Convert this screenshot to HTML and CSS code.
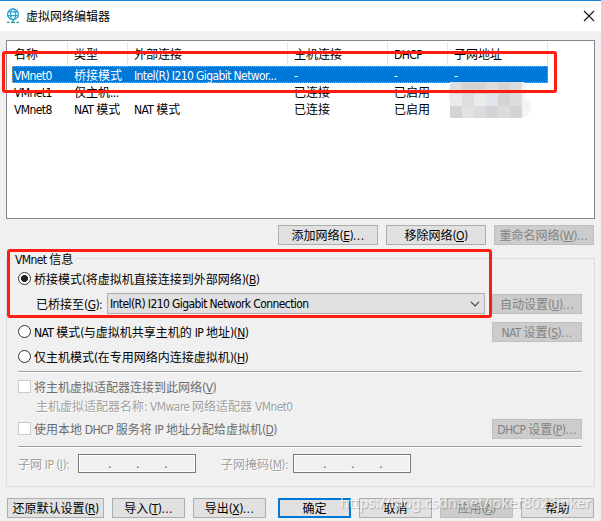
FILE: index.html
```html
<!DOCTYPE html>
<html lang="zh-CN">
<head>
<meta charset="utf-8">
<title>虚拟网络编辑器</title>
<link rel="stylesheet" href="styles.css">
</head>
<body>
<div class="window">
  <header class="titlebar">
    <svg class="logo" width="14" height="16" viewBox="0 0 14 16" fill="none" stroke="#2ba3cf" stroke-width="1.3">
      <circle cx="7" cy="6.3" r="5.4"/><ellipse cx="7" cy="6.3" rx="2.5" ry="5.4"/>
      <path d="M2.3 3.9h9.4M1.6 7.7h10.8M7 11.7v2.5"/><path d="M1 14.4h2.5M5 14.4h4M10.5 14.4h2.5" stroke="#18a08d"/>
    </svg>
    <h1 class="title">虚拟网络编辑器</h1>
    <svg class="close" width="12" height="12" viewBox="0 0 12 12" stroke="#111" stroke-width="1.1"><path d="M1 1l10 10M11 1L1 11"/></svg>
  </header>

  <section class="list">
    <div class="row head"><span>名称</span><span>类型</span><span>外部连接</span><span>主机连接</span><span><b>DHCP</b></span><span>子网地址</span></div>
    <div class="row selected"><span><b>VMnet0</b></span><span>桥接模式</span><span><b>Intel(R) I210 Gigabit Networ...</b></span><span><b>-</b></span><span><b>-</b></span><span><b>-</b></span></div>
    <div class="row"><span><b>VMnet1</b></span><span>仅主机<b>...</b></span><span></span><span>已连接</span><span>已启用</span><span></span></div>
    <div class="row"><span><b>VMnet8</b></span><span><b>NAT </b>模式</span><span><b>NAT </b>模式</span><span>已连接</span><span>已启用</span><span></span></div>
    <svg class="mosaic" width="84" height="37" viewBox="0 0 84 37">
      <path d="M4 0h73q5 6 1 16q6 3 6 9q0 9-9 11H3V22Q-2 10 4 0z" fill="#f4f4f6"/>
      <path d="M3 0h12v12H3zM15 12h12v12H15z" fill="#dedee0"/><path d="M15 0h24v12H15zM51 0h12v24H51z" fill="#d4d4d5"/>
      <path d="M39 0h12v12H39zM63 0h12v24H63z" fill="#dddddd"/><path d="M3 12h12v12H3zM27 12h12v12H27z" fill="#eaeaea"/><path d="M39 12h12v12H39z" fill="#e1e4e8"/>
      <path d="M3 24h12v12H3zM39 24h12v12H39zM63 24h12v12H63z" fill="#d5d3d5"/><path d="M15 24h12v12H15z" fill="#e2e2e4"/><path d="M27 24h12v12H27zM51 24h12v12H51z" fill="#dcdcde"/>
    </svg>
    <div class="mark mark-row"></div>
  </section>

  <div class="actions">
    <button>添加网络<b>(<u>E</u>)<i>...</i></b></button>
    <button>移除网络<b>(<u>O</u>)</b></button>
    <button disabled>重命名网络<b>(<u>W</u>)<i>...</i></b></button>
  </div>

  <section class="group">
    <div class="legend"><b>VMnet </b>信息</div>
    <div class="line l1"><i class="radio on"></i><span>桥接模式<b>(</b>将虚拟机直接连接到外部网络<b>)(<u>B</u>)</b></span></div>
    <div class="line l2">
      <span class="bridge-label">已桥接至<b>(<u>G</u>):</b></span>
      <div class="select"><b>Intel(R) I210 Gigabit Network Connection</b><svg width="10" height="6" viewBox="0 0 10 6" fill="none" stroke="#444" stroke-width="1.2"><path d="M1 .8l4 4 4-4"/></svg></div>
      <button disabled>自动设置<b>(<u>U</u>)<i>...</i></b></button>
    </div>
    <div class="line l3"><i class="radio"></i><span><b>NAT </b>模式<b>(</b>与虚拟机共享主机的<b> IP </b>地址<b>)(<u>N</u>)</b></span><button disabled><b>NAT </b>设置<b>(<u>S</u>)<i>...</i></b></button></div>
    <div class="line l4"><i class="radio"></i><span>仅主机模式<b>(</b>在专用网络内连接虚拟机<b>)(<u>H</u>)</b></span></div>
    <div class="rule"></div>
    <div class="line l5 dim"><i class="check"></i><span>将主机虚拟适配器连接到此网络<b>(<u>V</u>)</b></span></div>
    <div class="line l6 faint"><span>主机虚拟适配器名称<b>: VMware </b>网络适配器<b> VMnet0</b></span></div>
    <div class="line l7 dim"><i class="check"></i><span>使用本地<b> DHCP </b>服务将<b> IP </b>地址分配给虚拟机<b>(<u>D</u>)</b></span><button disabled><b>DHCP </b>设置<b>(<u>P</u>)<i>...</i></b></button></div>
    <div class="rule"></div>
    <div class="line l8 faint">
      <span class="ip-label">子网<b> IP (<u>I</u>):</b></span><div class="ip"><b>.</b><b>.</b><b>.</b></div>
      <span class="mask-label">子网掩码<b>(<u>M</u>):</b></span><div class="ip"><b>.</b><b>.</b><b>.</b></div>
    </div>
    <div class="mark mark-group"></div>
  </section>

  <footer class="footer">
    <button class="wide">还原默认设置<b>(<u>R</u>)</b></button>
    <button>导入<b>(<u>T</u>)<i>...</i></b></button>
    <button>导出<b>(<u>X</u>)<i>...</i></b></button>
    <button class="primary">确定</button>
    <button>取消</button>
    <button disabled>应用<b>(<u>A</u>)</b></button>
    <button>帮助</button>
    <div class="watermark">https://blog.csdn.net/joker8023joker</div>
  </footer>
</div>
</body>
</html>
```
FILE: styles.css
```css
* { box-sizing: border-box; }
body { margin: 0; overflow: hidden; background: #f0f0f0; }
.window {
  width: 601px; height: 521px; display: flex; flex-direction: column;
  font: 12px/16px "Noto Sans CJK SC", sans-serif; color: #000;
}
b { font: 12px/1 "DejaVu Sans Condensed", "DejaVu Sans", sans-serif; letter-spacing: -0.6px; }
b i { font-style: normal; letter-spacing: 0.4px; }
span, b, .legend { white-space: pre; }
u { text-decoration: underline; text-underline-offset: 1px; text-decoration-skip-ink: none; }

.titlebar {
  height: 31px; background: #fff; border-top: 1px solid #1883d7;
  display: flex; align-items: center; padding: 0 6px 1px;
}
.title { margin: 0 auto 0 6px; font-size: 12px; font-weight: 400; line-height: 16px; }

.list {
  position: relative; height: 179px; width: 589px; margin: 9px 0 0 6px;
  padding-left: 5px; background: #fff; border: 1px solid #828790; flex: none;
}
.row {
  display: grid; grid-template-columns: 56px 60px 160px 100px 60px 100px;
  width: 536px; height: 17px; align-items: center;
}
.row span { padding-left: 6px; }
.row span:first-child { padding-left: 2px; }
.head { height: 25px; }
.head span { height: 23px; line-height: 23px; border-right: 1px solid #e5e5e5; }
.selected { background: #0078d7; color: #fff; outline: 1px dotted #ef9a4b; outline-offset: -1px; }
.mosaic { position: absolute; left: 440px; top: 41px; }
.mark { position: absolute; border: 3px solid #ff1d10; border-radius: 3px; }
.mark-row { left: -5px; top: 10px; width: 555px; height: 42px; }

button {
  width: 73px; height: 20px; padding: 0 0 1px; border: 1px solid #adadad; border-radius: 0;
  background: #e1e1e1; font: inherit; line-height: 17px; color: #000; white-space: pre;
}
button:disabled { background: #ccc; border-color: #bfbfbf; color: #838383; }
.actions { display: flex; gap: 8px; margin: 6px 0 0 278px; }
.actions button { width: 100px; }

.group {
  position: relative; width: 589px; height: 229px; margin: 13px 0 0 6px;
  border: 1px solid #dcdcdc; padding: 0 12px 0 11px; flex: none;
}
.legend { width: max-content; height: 16px; margin: -8px 0 0 -6px; padding: 0 3px; line-height: 15px; background: #f0f0f0; }
.line { display: flex; align-items: center; }
.line span { line-height: 15px; padding-bottom: 1px; }
.line button { width: 90px; margin: 1px 0 0 auto; flex: none; }
.l1 { height: 23px; }
.l2 { height: 27px; }
.l3 { height: 29px; }
.l4 { height: 21px; }
.l5 { height: 27px; }
.l6 { height: 11px; padding-left: 18px; }
.l7 { height: 35px; }
.l8 { height: 31px; }
.rule { height: 2px; width: 564px; background: #a0a0a0; border-bottom: 1px solid #fff; }
.l4 + .rule { margin-top: 4px; }
.radio { width: 13px; height: 13px; margin-right: 3px; border: 1px solid #333; border-radius: 50%; background: #fff; }
.on { background: radial-gradient(circle, #222 0 3.2px, #fff 3.8px); }
.check { width: 13px; height: 13px; margin-right: 3px; border: 1px solid #ccc; background: #fff; }
.dim { color: #6d6d6d; }
.faint { color: #a0a0a0; text-shadow: 1px 1px #fff; }
.bridge-label { width: 89px; padding-left: 18px; }
.select {
  width: 378px; height: 21px; padding: 0 4px 0 2px; border: 1px solid #adadad; background: #e1e1e1;
  display: flex; align-items: center; justify-content: space-between;
}
.ip-label { width: 60px; }
.mask-label { width: 97px; padding-left: 25px; }
.ip {
  width: 118px; height: 19px; padding: 0 28px 0 29px; border: 1px solid #7a7a7a; box-shadow: inset 0 0 0 1px #fff;
  display: flex; justify-content: space-between; align-items: center; color: #555; text-shadow: none;
}
.mark-group { left: 0; top: -10px; width: 485px; height: 69px; }

.footer { position: relative; display: flex; gap: 8px; margin: 11px 0 0 7px; }
.footer .wide { width: 97px; }
.footer .primary { border: 2px solid #0078d7; margin-left: 4px; line-height: 15px; }
.watermark {
  position: absolute; left: 333px; top: -6px; font: 14.6px/20px "Noto Sans", sans-serif;
  color: rgba(255,255,255,.75); text-shadow: 1px 1px 1px rgba(0,0,0,.25);
}
```
